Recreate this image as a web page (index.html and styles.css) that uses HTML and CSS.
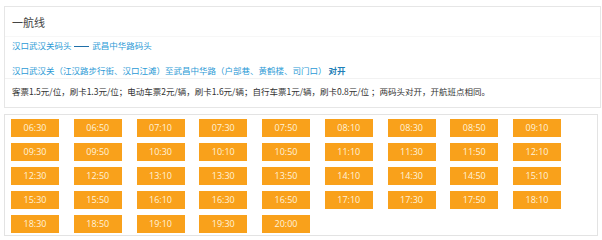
FILE: index.html
```html
<!DOCTYPE html>
<html lang="zh-CN">
<head>
<meta charset="utf-8">
<link rel="stylesheet" href="styles.css">
</head>
<body>
<div class="info">
  <div class="title">一航线</div>
  <div class="route">汉口武汉关码头 <span class="dash"></span> 武昌中华路码头</div>
  <div class="desc">汉口武汉关（江汉路步行街、汉口江滩）至武昌中华路（户部巷、黄鹤楼、司门口） <b>对开</b></div>
  <div class="price">客票1.5元/位，刷卡1.3元/位；电动车票2元/辆，刷卡1.6元/辆；自行车票1元/辆，刷卡0.8元/位 ；两码头对开，开航班点相同。</div>
</div>
<div class="times">
  <span class="t">06:30</span><span class="t">06:50</span><span class="t">07:10</span><span class="t">07:30</span><span class="t">07:50</span><span class="t">08:10</span><span class="t">08:30</span><span class="t">08:50</span><span class="t">09:10</span>
  <span class="t">09:30</span><span class="t">09:50</span><span class="t">10:30</span><span class="t">10:10</span><span class="t">10:50</span><span class="t">11:10</span><span class="t">11:30</span><span class="t">11:50</span><span class="t">12:10</span>
  <span class="t">12:30</span><span class="t">12:50</span><span class="t">13:10</span><span class="t">13:30</span><span class="t">13:50</span><span class="t">14:10</span><span class="t">14:30</span><span class="t">14:50</span><span class="t">15:10</span>
  <span class="t">15:30</span><span class="t">15:50</span><span class="t">16:10</span><span class="t">16:30</span><span class="t">16:50</span><span class="t">17:10</span><span class="t">17:30</span><span class="t">17:50</span><span class="t">18:10</span>
  <span class="t">18:30</span><span class="t">18:50</span><span class="t">19:10</span><span class="t">19:30</span><span class="t">20:00</span>
</div>
</body>
</html>
```
FILE: styles.css
```css
html, body {
  margin: 0;
  padding: 0;
  background: #fff;
}
body {
  font-family: "Noto Sans CJK SC", "Noto Sans", sans-serif;
  padding: 6px 1px 0 4px;
}
.info {
  width: 597px;
  height: 102px;
  box-sizing: border-box;
  border: 1px solid #e6e6e6;
  padding: 0 7px;
}
.title {
  height: 30px;
  line-height: 30px;
  font-size: 11px;
  color: #444;
  border-bottom: 1px solid #f7f7f7;
  margin: 0 -7px;
  padding: 0 7px;
  box-sizing: border-box;
}
.route {
  height: 16px;
  line-height: 16px;
  font-size: 8.5px;
  color: #2b9ad6;
}
.dash {
  display: inline-block;
  width: 15px;
  height: 1.5px;
  background: #1f6fa8;
  vertical-align: middle;
  margin: 0 1px;
}
.desc {
  margin-top: 9px;
  height: 17px;
  line-height: 16px;
  font-size: 8.5px;
  color: #2b9ad6;
  border-bottom: 1px solid #f2f2f2;
  box-sizing: border-box;
  margin-left: -7px;
  margin-right: -7px;
  padding: 0 7px;
}
.desc b {
  color: #1f7fb8;
  font-weight: bold;
}
.price {
  margin-top: 4px;
  line-height: 16px;
  font-size: 8.5px;
  color: #333;
}
.times {
  margin-top: 6px;
  width: 594px;
  height: 122px;
  box-sizing: border-box;
  border: 1px solid #e3e3e3;
  padding: 4px 6px 0;
  display: grid;
  grid-template-columns: repeat(9, 48px);
  grid-auto-rows: 18px;
  column-gap: 14.75px;
  row-gap: 6px;
  align-content: start;
}
.t {
  background: #f9a11b;
  color: #fff3dc;
  font-family: "Open Sans", "Liberation Sans", sans-serif;
  font-size: 9px;
  line-height: 18px;
  text-align: center;
}
```
